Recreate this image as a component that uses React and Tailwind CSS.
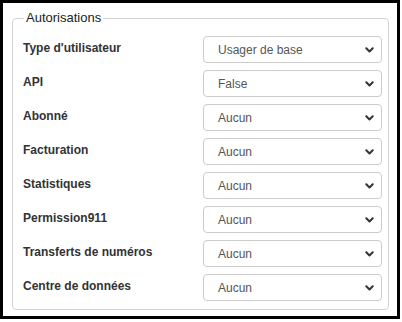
import React from 'react';

const rows = [
  { label: "Type d'utilisateur", value: 'Usager de base' },
  { label: 'API', value: 'False' },
  { label: 'Abonné', value: 'Aucun' },
  { label: 'Facturation', value: 'Aucun' },
  { label: 'Statistiques', value: 'Aucun' },
  { label: 'Permission911', value: 'Aucun' },
  { label: 'Transferts de numéros', value: 'Aucun' },
  { label: 'Centre de données', value: 'Aucun' },
];

const Chevron = () => (
  <svg width="9" height="6" viewBox="0 0 9 6" className="shrink-0">
    <polyline points="1.3,1.3 4.5,4.5 7.7,1.3" fill="none" stroke="#333" strokeWidth="2" strokeLinecap="round" strokeLinejoin="round" />
  </svg>
);

const App = () => {
  return (
    <div className="w-[402px] h-[322px] bg-white" style={{ fontFamily: '"Liberation Sans", Arial, sans-serif' }}>
      <div className="w-[400px] h-[319px] border-[3px] border-black pl-[9px] pr-[8px] pt-[7px]">
        <fieldset className="border border-[#d4d4d4] rounded-[4px] pl-[10px] pr-[6px] pb-[8px]">
          <legend className="ml-[1px] px-[2px] text-[13px] leading-[16px] text-[#222]">Autorisations</legend>
          <div className="flex flex-col gap-[7px] pt-[10px]">
            {rows.map((row) => (
              <div key={row.label} className="flex items-start h-[27px]">
                <div className="w-[180px] pt-[4px] text-[12px] leading-[16px] font-bold text-[#333]">{row.label}</div>
                <div className="flex-1 h-[27px] flex items-center justify-between border border-[#ccc] rounded-[4px] pl-[14px] pr-[7px] text-[12px] text-[#555]">
                  <span>{row.value}</span>
                  <Chevron />
                </div>
              </div>
            ))}
          </div>
        </fieldset>
      </div>
    </div>
  );
};

export default App;
